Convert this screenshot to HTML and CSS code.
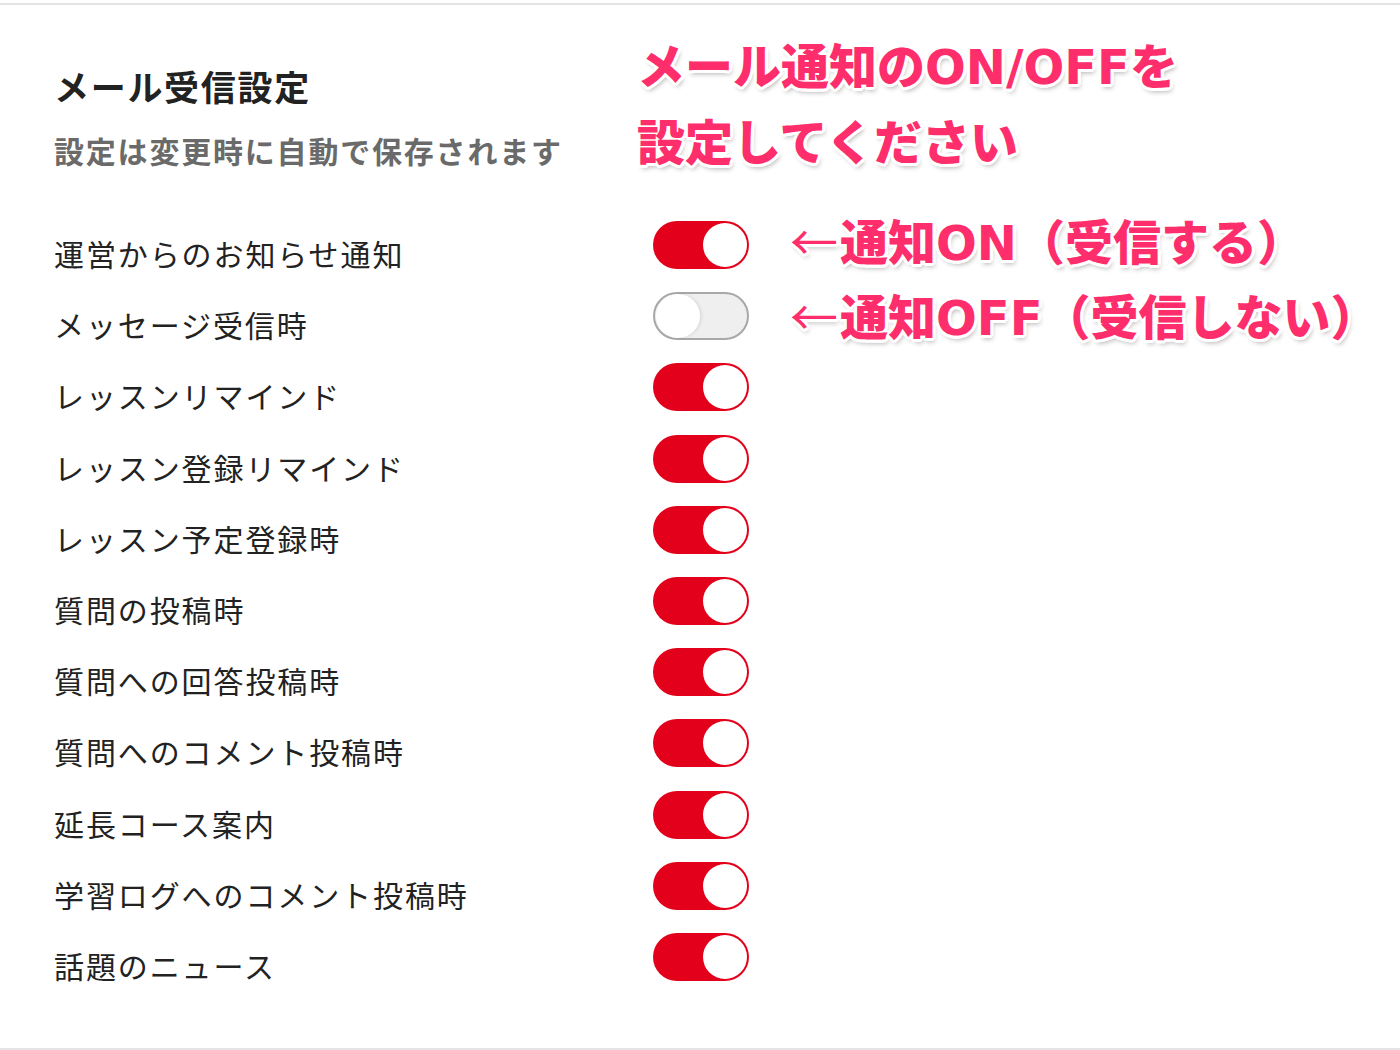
FILE: index.html
```html
<!DOCTYPE html>
<html lang="ja">
<head>
<meta charset="utf-8">
<title>メール受信設定</title>
<link rel="stylesheet" href="styles.css">
</head>
<body>
<div class="page">
  <header class="head">
    <h1 class="title">メール受信設定</h1>
    <p class="sub">設定は変更時に自動で保存されます</p>
  </header>
  <ul class="list">
    <li class="row"><span class="label">運営からのお知らせ通知</span><span class="switch on"><span class="knob"></span></span></li>
    <li class="row"><span class="label">メッセージ受信時</span><span class="switch off"><span class="knob"></span></span></li>
    <li class="row"><span class="label">レッスンリマインド</span><span class="switch on"><span class="knob"></span></span></li>
    <li class="row"><span class="label">レッスン登録リマインド</span><span class="switch on"><span class="knob"></span></span></li>
    <li class="row"><span class="label">レッスン予定登録時</span><span class="switch on"><span class="knob"></span></span></li>
    <li class="row"><span class="label">質問の投稿時</span><span class="switch on"><span class="knob"></span></span></li>
    <li class="row"><span class="label">質問への回答投稿時</span><span class="switch on"><span class="knob"></span></span></li>
    <li class="row"><span class="label">質問へのコメント投稿時</span><span class="switch on"><span class="knob"></span></span></li>
    <li class="row"><span class="label">延長コース案内</span><span class="switch on"><span class="knob"></span></span></li>
    <li class="row"><span class="label">学習ログへのコメント投稿時</span><span class="switch on"><span class="knob"></span></span></li>
    <li class="row"><span class="label">話題のニュース</span><span class="switch on"><span class="knob"></span></span></li>
  </ul>
</div>
<div class="note note-main">
  <div class="note-line">メール通知の<span class="lat">ON/OFF</span>を</div>
  <div class="note-line">設定してください</div>
</div>
<div class="note note-on"><span class="arrow">←</span>通知<span class="lat">ON</span>（受信する）</div>
<div class="note note-off"><span class="arrow">←</span>通知<span class="lat">OFF</span>（受信しない）</div>
</body>
</html>
```
FILE: styles.css
```css
html, body {
  margin: 0;
  padding: 0;
  background: #fff;
}
body {
  font-family: "Noto Sans CJK JP", "Noto Sans", sans-serif;
  color: #222;
  position: relative;
  width: 1400px;
  height: 1050px;
  overflow: hidden;
}
.page {
  box-sizing: border-box;
  margin-top: 3px;
  height: 1047px;
  border-top: 2px solid #e4e4e4;
  border-bottom: 2px solid #e4e4e4;
  padding-left: 54px;
}
.head {
  padding-top: 60px;
}
.title {
  margin: 0;
  font-size: 35px;
  line-height: 42px;
  font-weight: 700;
  letter-spacing: 1.7px;
  color: #222;
}
.sub {
  margin: 25px 0 0;
  font-size: 30px;
  line-height: 36px;
  font-weight: 700;
  letter-spacing: 1.8px;
  color: #6a6a6a;
}
.list {
  list-style: none;
  margin: 53px 0 0;
  padding: 0;
}
.row {
  display: flex;
  align-items: flex-start;
  height: 71.2px;
}
.label {
  width: 599px;
  font-size: 30px;
  line-height: 48px;
  padding-top: 8px;
  letter-spacing: 1.9px;
  color: #222;
}
.switch {
  box-sizing: border-box;
  width: 96px;
  height: 48px;
  border-radius: 24px;
  display: flex;
  align-items: center;
  padding: 2px;
}
.switch.on {
  background: #e3001b;
  justify-content: flex-end;
}
.switch.off {
  background: #efefef;
  border: 2px solid #a8a8a8;
  padding: 0 0 0 1px;
  justify-content: flex-start;
}
.knob {
  width: 44px;
  height: 44px;
  border-radius: 50%;
  background: #fff;
}
.switch.off .knob {
  box-shadow: 2px 0 3px rgba(0, 0, 0, 0.08);
}
.note {
  position: absolute;
  font-size: 48px;
  line-height: 1;
  font-weight: 900;
  color: #fe2d6b;
  white-space: nowrap;
  text-shadow:
    3px 0 0 #fff, -3px 0 0 #fff, 0 3px 0 #fff, 0 -3px 0 #fff,
    2px 2px 0 #fff, -2px -2px 0 #fff, 2px -2px 0 #fff, -2px 2px 0 #fff,
    1px 3px 0 #fff, -1px 3px 0 #fff, 3px 1px 0 #fff, -3px 1px 0 #fff,
    2px 4px 5px rgba(0, 0, 0, 0.3);
}
.lat {
  font-family: "DejaVu Sans", "Noto Sans CJK JP", sans-serif;
  font-weight: 700;
  letter-spacing: 0;
}
.arrow {
  font-weight: 400;
  margin-right: 2px;
}
.note-main {
  left: 637px;
  top: 39px;
}
.note-line + .note-line {
  margin-top: 24px;
}
.note-on {
  left: 790px;
  top: 215px;
}
.note-off {
  left: 790px;
  top: 290px;
}
```
